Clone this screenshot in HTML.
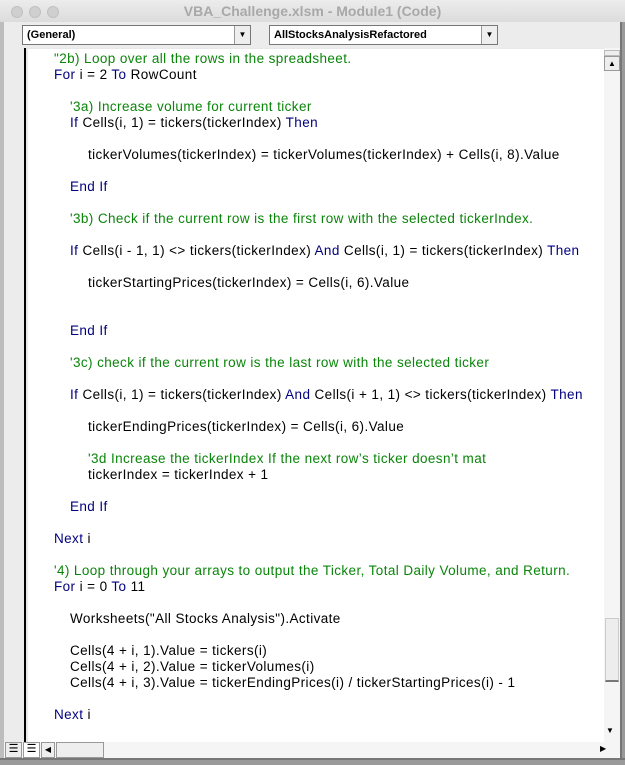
<!DOCTYPE html>
<html><head><meta charset="utf-8"><style>
*{margin:0;padding:0;box-sizing:border-box}
body{width:625px;height:765px;background:#e8e8e8;position:relative;overflow:hidden;font-family:"Liberation Sans",sans-serif}
.title{position:absolute;left:0;top:0;width:625px;height:22px;background:linear-gradient(#ececec,#dcdcdc);text-align:center;font-size:14px;font-weight:bold;color:#a8a8a8;line-height:23px}
.dot{position:absolute;top:6px;width:12px;height:12px;border-radius:50%;background:#cfcfcf;border:1px solid #c0c0c0}
.bar{position:absolute;left:0;top:22px;width:625px;height:26px;background:#ececec}
.dd{position:absolute;top:3px;height:20px;background:#fff;border:1px solid #777;font-size:11px;font-weight:bold;line-height:18px;padding-left:4px;color:#000}
.dd .b{position:absolute;right:0;top:0;width:16px;height:18px;background:#eee;border-left:1px solid #999;font-size:8px;text-align:center;line-height:18px}
.gut{position:absolute;left:4px;top:48px;width:22px;height:694px;background:#ececec;border-right:2px solid #000}
.code{position:absolute;left:28px;top:49px;width:576px;height:693px;background:#fff;font-size:13.5px;color:#000;letter-spacing:0.4px}
.l{position:absolute;white-space:pre;line-height:16px}
.c{color:#0a850a}.k{color:#00007f}
.vs{position:absolute;left:604px;top:48px;width:16px;height:694px;background:#f5f5f5}
.hs{position:absolute;left:4px;top:742px;width:616px;height:16px;background:#f5f5f5}
.rb{position:absolute;left:620px;top:22px;width:5px;height:743px;background:#9a9a9a;border-left:2px solid #777}
.bb{position:absolute;left:0;top:758px;width:625px;height:7px;background:#9a9a9a;border-top:2px solid #777}
.lb{position:absolute;left:0;top:22px;width:4px;height:743px;background:#bdbdbd}
.btn{position:absolute;background:#eee;border:1px solid #999;font-size:8px;text-align:center;line-height:14px}
</style></head><body>
<div class="title">VBA_Challenge.xlsm - Module1 (Code)</div>
<div class="dot" style="left:11px"></div><div class="dot" style="left:29px"></div><div class="dot" style="left:47px"></div>
<div class="bar">
<div class="dd" style="left:22px;width:229px">(General)<div class="b">▼</div></div>
<div class="dd" style="left:269px;width:229px">AllStocksAnalysisRefactored<div class="b">▼</div></div>
</div>
<div class="lb"></div>
<div class="gut"></div>
<div class="code">
<div class="l c" style="left:26px;top:2px">"2b) Loop over all the rows in the spreadsheet.</div>
<div class="l" style="left:26px;top:18px"><span class="k">For</span> i = 2 <span class="k">To</span> RowCount</div>
<div class="l c" style="left:42px;top:50px">'3a) Increase volume for current ticker</div>
<div class="l" style="left:42px;top:66px"><span class="k">If</span> Cells(i, 1) = tickers(tickerIndex) <span class="k">Then</span></div>
<div class="l" style="left:60px;top:98px">tickerVolumes(tickerIndex) = tickerVolumes(tickerIndex) + Cells(i, 8).Value</div>
<div class="l k" style="left:42px;top:130px">End If</div>
<div class="l c" style="left:42px;top:162px">'3b) Check if the current row is the first row with the selected tickerIndex.</div>
<div class="l" style="left:42px;top:194px"><span class="k">If</span> Cells(i - 1, 1) &lt;&gt; tickers(tickerIndex) <span class="k">And</span> Cells(i, 1) = tickers(tickerIndex) <span class="k">Then</span></div>
<div class="l" style="left:60px;top:226px">tickerStartingPrices(tickerIndex) = Cells(i, 6).Value</div>
<div class="l k" style="left:42px;top:274px">End If</div>
<div class="l c" style="left:42px;top:306px">'3c) check if the current row is the last row with the selected ticker</div>
<div class="l" style="left:42px;top:338px"><span class="k">If</span> Cells(i, 1) = tickers(tickerIndex) <span class="k">And</span> Cells(i + 1, 1) &lt;&gt; tickers(tickerIndex) <span class="k">Then</span></div>
<div class="l" style="left:60px;top:370px">tickerEndingPrices(tickerIndex) = Cells(i, 6).Value</div>
<div class="l c" style="left:60px;top:402px">'3d Increase the tickerIndex If the next row’s ticker doesn’t mat</div>
<div class="l" style="left:60px;top:418px">tickerIndex = tickerIndex + 1</div>
<div class="l k" style="left:42px;top:450px">End If</div>
<div class="l" style="left:26px;top:482px"><span class="k">Next</span> i</div>
<div class="l c" style="left:26px;top:514px">'4) Loop through your arrays to output the Ticker, Total Daily Volume, and Return.</div>
<div class="l" style="left:26px;top:530px"><span class="k">For</span> i = 0 <span class="k">To</span> 11</div>
<div class="l" style="left:42px;top:562px">Worksheets("All Stocks Analysis").Activate</div>
<div class="l" style="left:42px;top:594px">Cells(4 + i, 1).Value = tickers(i)</div>
<div class="l" style="left:42px;top:610px">Cells(4 + i, 2).Value = tickerVolumes(i)</div>
<div class="l" style="left:42px;top:626px">Cells(4 + i, 3).Value = tickerEndingPrices(i) / tickerStartingPrices(i) - 1</div>
<div class="l" style="left:26px;top:658px"><span class="k">Next</span> i</div>
</div>
<div class="vs">
<div class="btn" style="left:0;top:2px;width:16px;height:6px;border-color:#bbb"></div>
<div class="btn" style="left:0;top:8px;width:16px;height:15px">▲</div>
<div class="btn" style="left:1px;top:570px;width:14px;height:64px;border-color:#ccc;border-bottom:2px solid #777;background:#ededed"></div>
<div style="position:absolute;left:2px;top:678px;font-size:8px">▼</div>
</div>
<div class="hs">
<div class="btn" style="left:1px;top:0;width:17px;height:16px;line-height:12px;font-size:11px">☰</div>
<div class="btn" style="left:19px;top:0;width:17px;height:16px;line-height:12px;font-size:11px;background:#fff">☰</div>
<div class="btn" style="left:37px;top:0;width:14px;height:16px">◀</div>
<div class="btn" style="left:52px;top:0;width:48px;height:16px"></div>
<div style="position:absolute;left:596px;top:2px;font-size:8px">▶</div>
</div>
<div class="rb"></div>
<div class="bb"></div>
</body></html>
